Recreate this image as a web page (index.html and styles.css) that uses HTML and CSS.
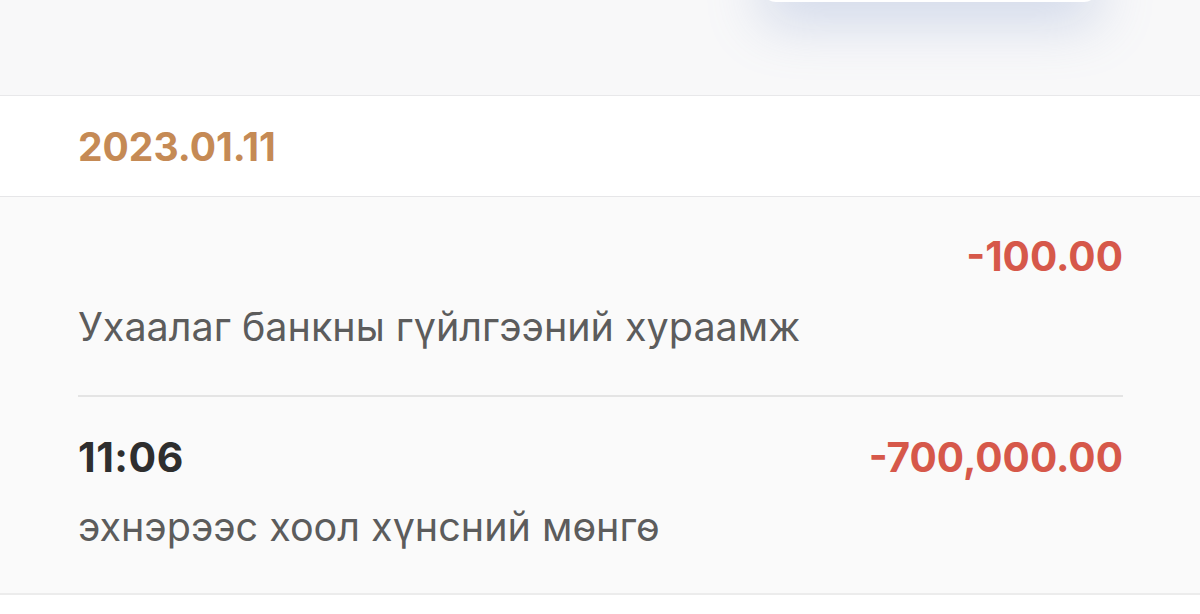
FILE: index.html
```html
<!DOCTYPE html>
<html lang="mn">
<head>
<meta charset="utf-8" />
<meta name="viewport" content="width=device-width" />
<title>Гүйлгээний түүх</title>
<link rel="stylesheet" href="styles.css">
</head>
<body>
<div class="topBar">
	<div class="filterCard"></div>
</div>
<div class="dayHeader">2023.01.11</div>
<ul class="txList">
	<li class="tx">
		<div class="txRow">
			<span class="txTime"></span>
			<span class="txAmount">-100.00</span>
		</div>
		<div class="txDesc">Ухаалаг банкны гүйлгээний хураамж</div>
	</li>
	<li class="tx">
		<div class="txRow">
			<span class="txTime">11:06</span>
			<span class="txAmount">-700,000.00</span>
		</div>
		<div class="txDesc">эхнэрээс хоол хүнсний мөнгө</div>
	</li>
</ul>
</body>
</html>
```
FILE: styles.css
```css
html, body {
	margin: 0;
	padding: 0;
	width: 100%;
	height: 100%;
}
body {
	font-family: Inter, "Noto Sans", Arial, sans-serif;
	background-color: #ffffff;
	overflow: hidden;
}
div.topBar {
	height: 95px;
	background-color: #f8f8f9;
	border-bottom: 1px solid #e8e8ea;
	display: flex;
	justify-content: flex-end;
	padding-right: 102px;
	overflow: hidden;
}
div.filterCard {
	width: 336px;
	height: 60px;
	margin-top: -58px;
	background-color: #ffffff;
	border-radius: 14px;
	box-shadow: 0 20px 55px rgba(120, 145, 200, 0.32);
}
div.dayHeader {
	height: 101px;
	box-sizing: border-box;
	padding: 0 78px;
	display: flex;
	align-items: center;
	font-size: 39px;
	font-weight: 700;
	color: #c58a55;
	background-color: #ffffff;
	border-bottom: 1px solid #e6e6e8;
}
ul.txList {
	list-style: none;
	margin: 0;
	padding: 0 77px 0 78px;
	background-color: #fafafa;
	border-bottom: 2px solid #ececec;
}
li.tx {
	height: 198px;
	box-sizing: border-box;
	padding-top: 35px;
}
li.tx + li.tx {
	border-top: 2px solid #e4e4e4;
	padding-top: 35px;
}
div.txRow {
	display: flex;
	justify-content: space-between;
	align-items: baseline;
	height: 48px;
}
span.txTime {
	font-size: 41px;
	font-weight: 700;
	letter-spacing: 0.5px;
	color: #2e2e2e;
}
span.txAmount {
	font-size: 40.5px;
	font-weight: 700;
	color: #d6584a;
}
div.txDesc {
	margin-top: 23px;
	font-size: 39.5px;
	font-weight: 400;
	color: #5c5c5c;
}
```
